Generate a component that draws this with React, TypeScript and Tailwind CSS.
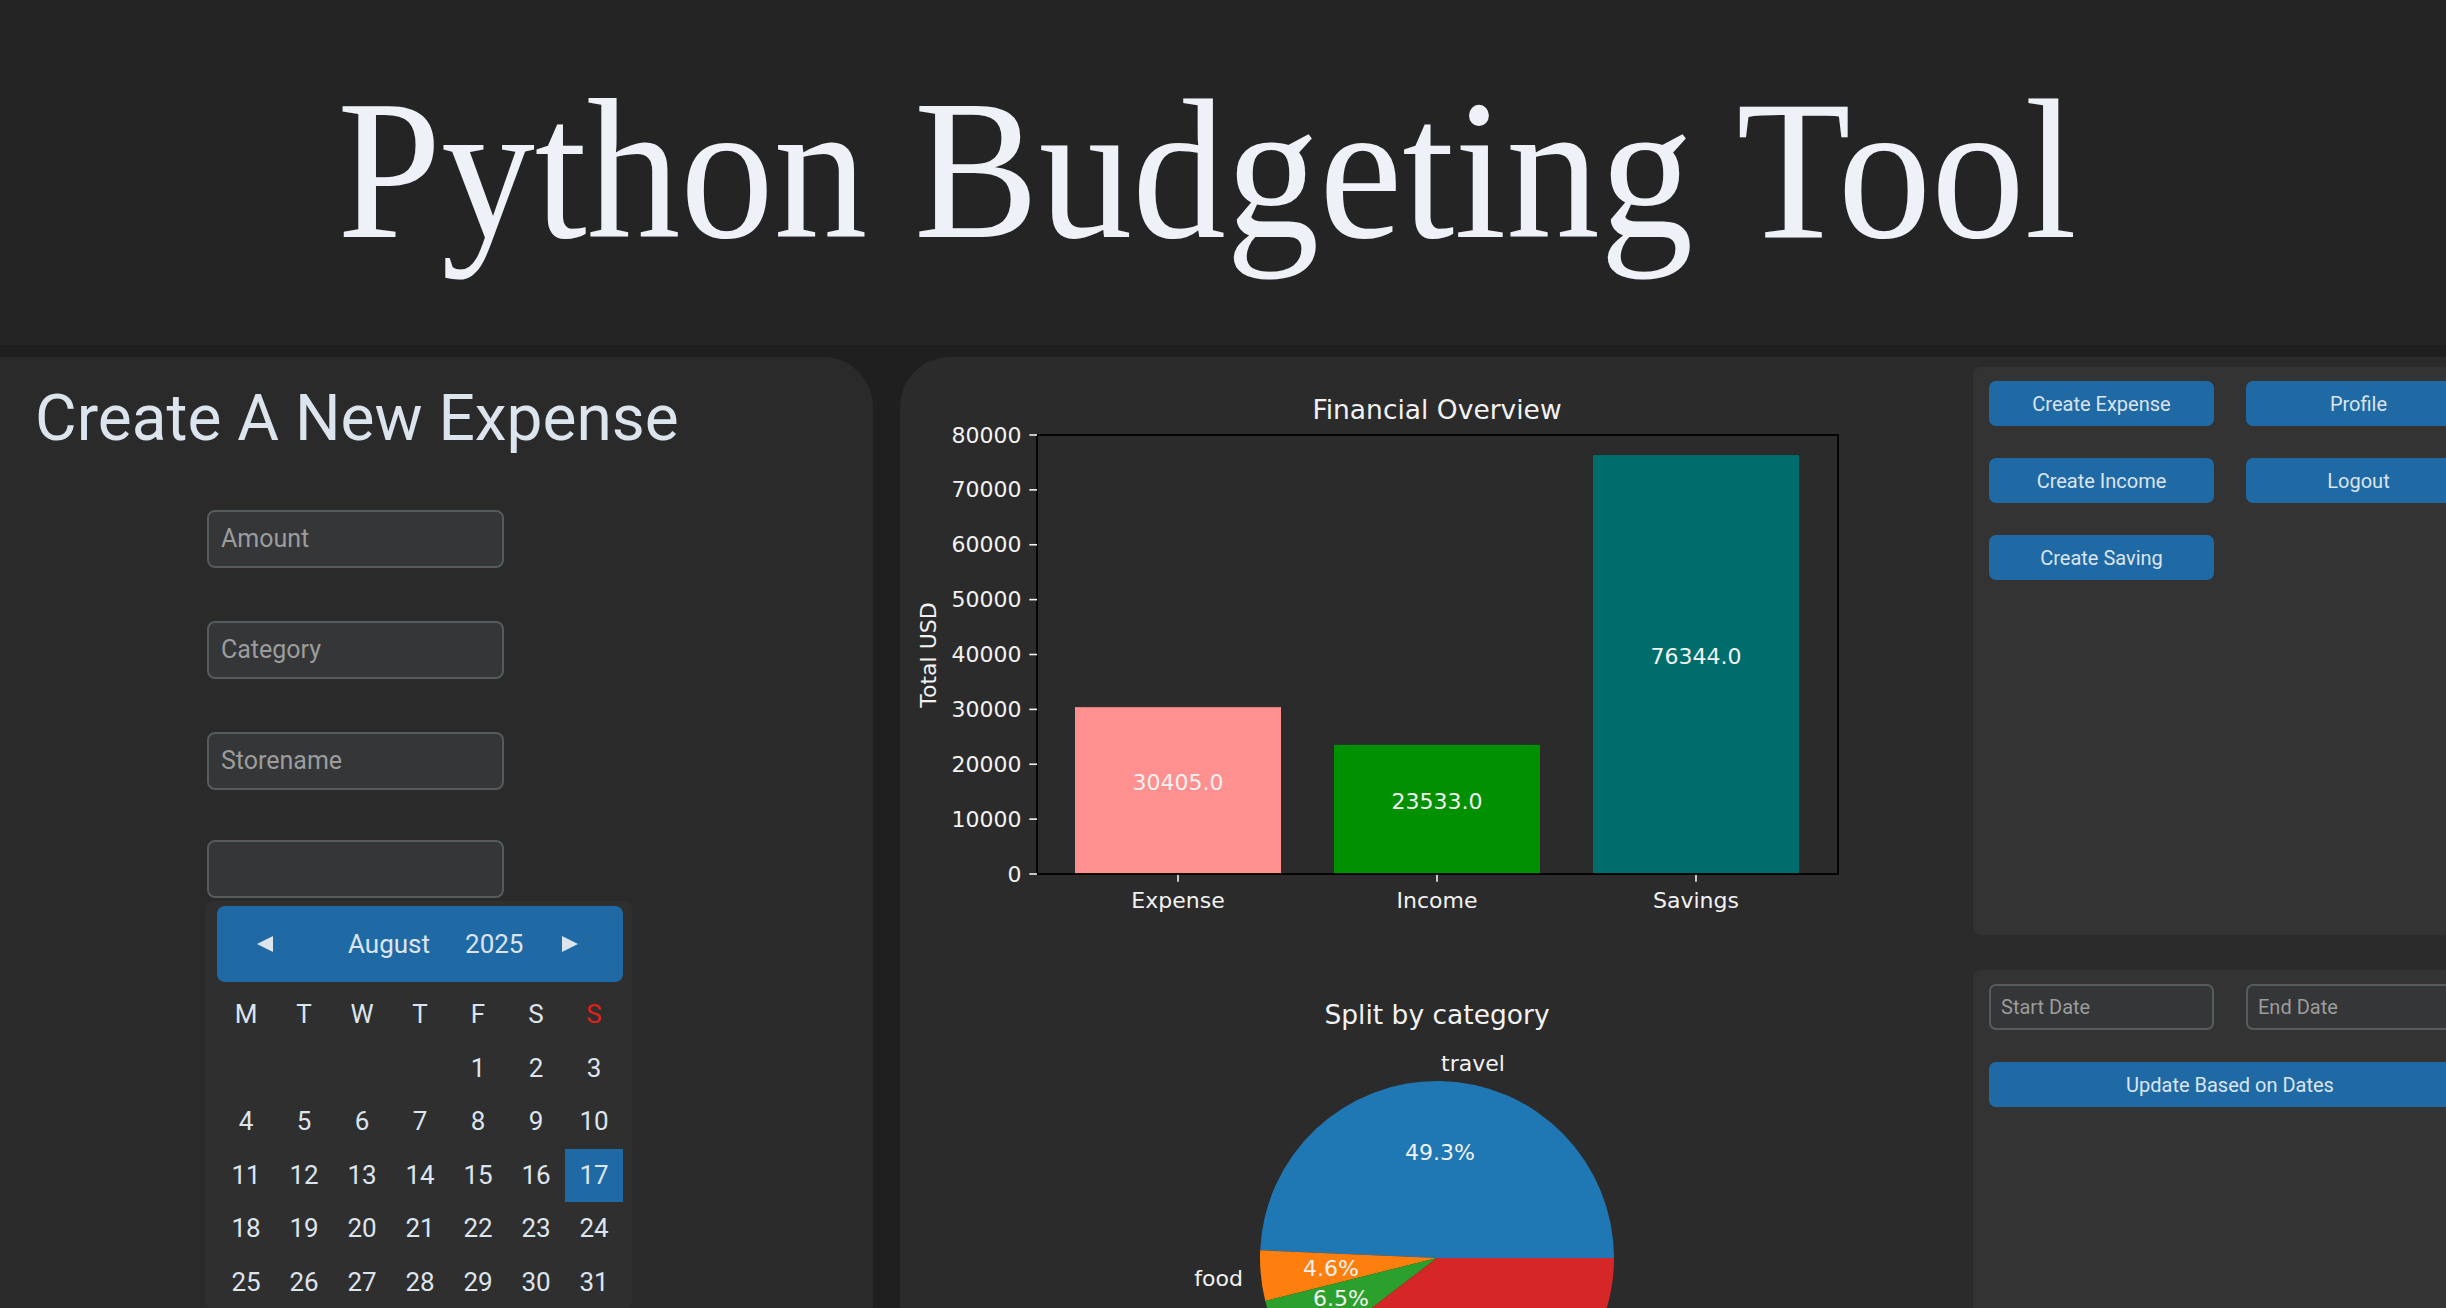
import React from "react";

const ui = { fontFamily: "Roboto, 'Liberation Sans', sans-serif" };
const mpl = "'DejaVu Sans', 'Liberation Sans', sans-serif";

function Field({ placeholder, mt }: { placeholder?: string; mt: string }) {
  return (
    <div
      className={`${mt} ml-[207px] w-[297px] h-[58px] shrink-0 rounded-[8px] border-2 border-[#565b5e] bg-[#343638] px-[12px] flex items-center text-[25px] text-[#9c9c9c]`}
      style={ui}
    >
      {placeholder}
    </div>
  );
}

function Calendar() {
  const names = ["M", "T", "W", "T", "F", "S", "S"];
  const cells: (number | null)[] = [null, null, null, null];
  for (let d = 1; d <= 31; d++) cells.push(d);
  return (
    <div className="ml-[205px] mt-[3px] w-[427px] bg-[#2f2f2f] rounded-[8px] pt-[5px] pl-[12px] pr-[9px] flex flex-col" style={ui}>
      <div className="h-[76px] rounded-[8px] bg-[#1f6aa5] flex items-center text-[26px] text-[#dce4ee]">
        <svg width="18" height="16" viewBox="0 0 18 16" className="ml-[39px]">
          <polygon points="17,0 17,16 1,8" fill="#dce4ee" />
        </svg>
        <span className="ml-[74px]">August</span>
        <span className="ml-[35px]">2025</span>
        <svg width="18" height="16" viewBox="0 0 18 16" className="ml-[38px]">
          <polygon points="1,0 1,16 17,8" fill="#dce4ee" />
        </svg>
      </div>
      <div className="mt-[6px] w-[406px] grid grid-cols-7 text-[26px] text-[#dce4ee]">
        {names.map((n, i) => (
          <div key={"n" + i} className={`h-[53.5px] flex items-center justify-center ${i === 6 ? "text-[#e3211b]" : ""}`}>
            {n}
          </div>
        ))}
        {cells.map((c, i) => (
          <div
            key={"c" + i}
            className={`h-[53.5px] flex items-center justify-center ${c === 17 ? "bg-[#1f6aa5]" : ""}`}
          >
            {c ?? ""}
          </div>
        ))}
      </div>
    </div>
  );
}

function pt(cx: number, cy: number, r: number, deg: number) {
  const a = (deg * Math.PI) / 180;
  return [cx + r * Math.cos(a), cy - r * Math.sin(a)];
}

function Charts() {
  const x0 = 1037, x1 = 1838, yTop = 435, yBot = 874;
  const sy = (v: number) => yBot - (v / 80000) * (yBot - yTop);
  const ticks = [0, 10000, 20000, 30000, 40000, 50000, 60000, 70000, 80000];
  const bars = [
    { name: "Expense", v: 30405, c: "#ff9090", cx: 1178 },
    { name: "Income", v: 23533, c: "#009000", cx: 1437 },
    { name: "Savings", v: 76344, c: "#006d6d", cx: 1696 },
  ];
  const bw = 206;
  const cx = 1437, cy = 1258, r = 177;
  const slices = [
    { a0: 0, a1: 177.48, c: "#1f77b4" },
    { a0: 177.48, a1: 194.04, c: "#ff7f0e" },
    { a0: 194.04, a1: 217.44, c: "#2ca02c" },
    { a0: 217.44, a1: 360, c: "#d62728" },
  ];
  const arc = (a0: number, a1: number) => {
    const [sx, sy2] = pt(cx, cy, r, a0);
    const [ex, ey] = pt(cx, cy, r, a1);
    const large = a1 - a0 > 180 ? 1 : 0;
    return `M ${cx} ${cy} L ${sx} ${sy2} A ${r} ${r} 0 ${large} 0 ${ex} ${ey} Z`;
  };
  const txt = "#f2f2f2";
  return (
    <svg width="1073" height="951" viewBox="900 357 1073 951" className="shrink-0 block">
      <text x="1437" y="409" fill={txt} fontFamily={mpl} fontSize="26.5" textAnchor="middle" dominantBaseline="central">
        Financial Overview
      </text>
      {bars.map((b) => {
        const top = sy(b.v);
        return (
          <g key={b.name}>
            <rect x={b.cx - bw / 2} y={top} width={bw} height={yBot - top} fill={b.c} />
            <text x={b.cx} y={(top + yBot) / 2 - 8} fill={txt} fontFamily={mpl} fontSize="22" textAnchor="middle" dominantBaseline="central">
              {b.v.toFixed(1)}
            </text>
            <line x1={b.cx} x2={b.cx} y1={yBot} y2={yBot + 7.7} stroke={txt} strokeWidth="1.6" />
            <text x={b.cx} y={900} fill={txt} fontFamily={mpl} fontSize="22" textAnchor="middle" dominantBaseline="central">
              {b.name}
            </text>
          </g>
        );
      })}
      <rect x={x0} y={yTop} width={x1 - x0} height={yBot - yTop} fill="none" stroke="#000" strokeWidth="1.8" />
      {ticks.map((t) => (
        <g key={t}>
          <line x1={x0 - 7.7} x2={x0} y1={sy(t)} y2={sy(t)} stroke={txt} strokeWidth="1.6" />
          <text x={x0 - 15.4} y={sy(t)} fill={txt} fontFamily={mpl} fontSize="22" textAnchor="end" dominantBaseline="central">
            {t}
          </text>
        </g>
      ))}
      <text
        x="928"
        y="655"
        fill={txt}
        fontFamily={mpl}
        fontSize="22"
        textAnchor="middle"
        dominantBaseline="central"
        transform="rotate(-90 928 655)"
      >
        Total USD
      </text>

      <text x="1437" y="1014" fill={txt} fontFamily={mpl} fontSize="26.5" textAnchor="middle" dominantBaseline="central">
        Split by category
      </text>
      {slices.map((s, i) => (
        <path key={i} d={arc(s.a0, s.a1)} fill={s.c} />
      ))}
      <text x="1441" y="1063" fill={txt} fontFamily={mpl} fontSize="22" textAnchor="start" dominantBaseline="central">
        travel
      </text>
      <text x="1243" y="1278" fill={txt} fontFamily={mpl} fontSize="22" textAnchor="end" dominantBaseline="central">
        food
      </text>
      <text x="1440" y="1152" fill={txt} fontFamily={mpl} fontSize="22" textAnchor="middle" dominantBaseline="central">
        49.3%
      </text>
      <text x="1331" y="1268" fill={txt} fontFamily={mpl} fontSize="22" textAnchor="middle" dominantBaseline="central">
        4.6%
      </text>
      <text x="1341" y="1298" fill={txt} fontFamily={mpl} fontSize="22" textAnchor="middle" dominantBaseline="central">
        6.5%
      </text>
    </svg>
  );
}

function Btn({ children, w }: { children: React.ReactNode; w: string }) {
  return (
    <div
      className={`${w} h-[45px] shrink-0 rounded-[7px] bg-[#1f6aa5] flex items-center justify-center text-[20px] text-[#dce4ee]`}
      style={ui}
    >
      {children}
    </div>
  );
}

function SmallField({ placeholder }: { placeholder: string }) {
  return (
    <div
      className="w-[225px] h-[46px] shrink-0 rounded-[7px] border-2 border-[#565b5e] bg-[#343638] px-[10px] flex items-center text-[20px] text-[#9c9c9c]"
      style={ui}
    >
      {placeholder}
    </div>
  );
}

export default function App() {
  return (
    <div className="w-[2446px] h-[1308px] overflow-hidden bg-[#242424] flex flex-col">
      <div className="h-[345px] shrink-0 flex justify-center pt-[76px] pr-[32px]">
        <div
          className="h-[187px] leading-none text-[187px] text-[#eef2f8] whitespace-nowrap scale-y-[1.07]"
          style={{ fontFamily: "'Liberation Serif', 'Times New Roman', serif" }}
        >
          Python Budgeting Tool
        </div>
      </div>
      <div className="flex-1 flex gap-[27px] bg-[#1f1f1f] pt-[12px] min-h-0">
        <div className="w-[873px] shrink-0 bg-[#2a2a2a] rounded-tr-[50px] pt-[30px] flex flex-col">
          <div className="pl-[35px] h-[64px] leading-none text-[64px] text-[#dce4ee] whitespace-nowrap" style={ui}>
            Create A New Expense
          </div>
          <Field placeholder="Amount" mt="mt-[59px]" />
          <Field placeholder="Category" mt="mt-[53px]" />
          <Field placeholder="Storename" mt="mt-[53px]" />
          <Field mt="mt-[50px]" />
          <Calendar />
        </div>
        <div className="w-[1600px] shrink-0 bg-[#2b2b2b] rounded-tl-[50px] flex">
          <Charts />
          <div className="w-[520px] shrink-0 pt-[10px] flex flex-col gap-[35px]">
            <div className="h-[568px] shrink-0 bg-[#333333] rounded-[8px] pl-[16px] pt-[14px] flex flex-col gap-[32px]">
              <div className="flex gap-[32px]">
                <Btn w="w-[225px]">Create Expense</Btn>
                <Btn w="w-[225px]">Profile</Btn>
              </div>
              <div className="flex gap-[32px]">
                <Btn w="w-[225px]">Create Income</Btn>
                <Btn w="w-[225px]">Logout</Btn>
              </div>
              <div className="flex gap-[32px]">
                <Btn w="w-[225px]">Create Saving</Btn>
              </div>
            </div>
            <div className="flex-1 bg-[#333333] rounded-t-[8px] pl-[16px] pt-[14px] flex flex-col">
              <div className="flex gap-[32px]">
                <SmallField placeholder="Start Date" />
                <SmallField placeholder="End Date" />
              </div>
              <div className="mt-[32px]">
                <Btn w="w-[482px]">Update Based on Dates</Btn>
              </div>
            </div>
          </div>
        </div>
      </div>
    </div>
  );
}
